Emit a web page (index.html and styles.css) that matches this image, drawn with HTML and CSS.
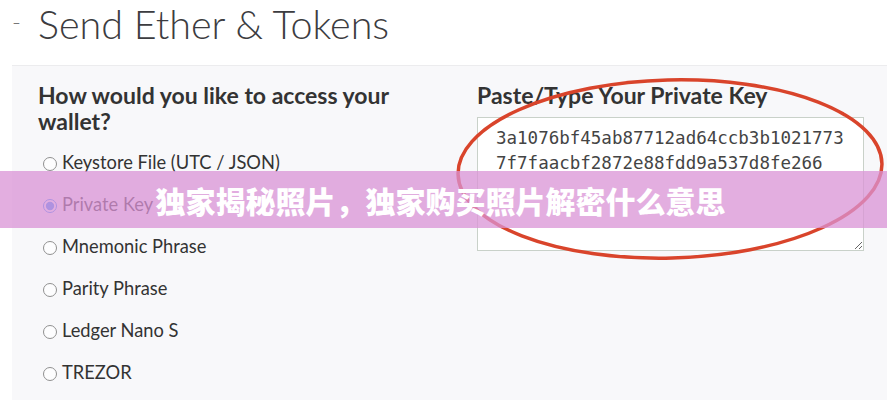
FILE: index.html
```html
<!DOCTYPE html>
<html lang="zh-CN">
    <head>
        <meta charset="UTF-8" />
        <meta name="viewport" content="width=device-width, initial-scale=1.0" />
        <title>Send Ether &amp; Tokens</title>
        <link rel="stylesheet" href="styles.css">
    </head>
    <body>
        <header class="top">
            <span class="dash">-</span>
            <h1 class="title">Send Ether &amp; Tokens</h1>
        </header>
        <main class="panel">
            <section class="access">
                <h2 class="heading">How would you like to access your wallet?</h2>
                <ul class="choices">
                    <li class="choice"><label><input type="radio" name="type" />Keystore File (UTC / JSON)</label></li>
                    <li class="choice"><label><input type="radio" name="type" checked />Private Key</label></li>
                    <li class="choice"><label><input type="radio" name="type" />Mnemonic Phrase</label></li>
                    <li class="choice"><label><input type="radio" name="type" />Parity Phrase</label></li>
                    <li class="choice"><label><input type="radio" name="type" />Ledger Nano S</label></li>
                    <li class="choice"><label><input type="radio" name="type" />TREZOR</label></li>
                </ul>
            </section>
            <section class="key">
                <h2 class="heading">Paste/Type Your Private Key</h2>
                <textarea class="keybox" readonly>3a1076bf45ab87712ad64ccb3b1021773
7f7faacbf2872e88fdd9a537d8fe266</textarea>
            </section>
        </main>
        <svg class="circle" width="887" height="400" viewBox="0 0 887 400">
            <ellipse cx="670" cy="169" rx="212" ry="89" transform="rotate(-1.5 670 169)" />
        </svg>
        <div class="banner">独家揭秘照片，独家购买照片解密什么意思</div>
    </body>
</html>
```

FILE: styles.css
```css
* {
    margin: 0;
    padding: 0;
    box-sizing: border-box;
}

body {
    position: relative;
    width: 887px;
    height: 400px;
    overflow: hidden;
    background: #fff;
    font-family: Lato, "Open Sans", sans-serif;
    color: #333;
}

.top {
    display: flex;
    align-items: center;
    height: 65px;
    padding-left: 12px;

    .dash {
        width: 26px;
        font-size: 24px;
        font-weight: 300;
        color: #777;
        margin-top: -22px;
    }
    .title {
        font-size: 39.5px;
        font-weight: 300;
        color: #3c3c40;
        margin-top: -18px;
    }
}

.panel {
    display: grid;
    grid-template-columns: 1fr 387px;
    height: 335px;
    margin-left: 12px;
    padding: 16px 23px 0 26px;
    background: #f8f8fa;
    border-top: 1px solid #ececee;
}

.heading {
    font-size: 23px;
    line-height: 26px;
    font-weight: 700;
    color: #333;
}

.access .heading {
    width: 400px;
}

.choices {
    margin-top: 7px;
    list-style: none;

    .choice {
        height: 42px;
        display: flex;
        align-items: center;
    }
    label {
        display: flex;
        align-items: center;
        font-size: 18.3px;
        color: #333;
    }
    input[type='radio'] {
        width: 14px;
        height: 14px;
        margin: 4px 5px 0 5px;
        opacity: 0.8;
    }
}

.keybox {
    display: block;
    width: 387px;
    height: 134px;
    margin-top: 9px;
    padding: 8px 10px 0 18px;
    border: 1px solid #c9d1c9;
    background: #fff;
    font-family: "DejaVu Sans Mono", monospace;
    font-size: 17.5px;
    line-height: 25px;
    color: #444;
    white-space: pre;
    overflow: hidden;
    resize: both;
}

.circle {
    position: absolute;
    left: 0;
    top: 0;
    pointer-events: none;

    ellipse {
        fill: none;
        stroke: #d9442b;
        stroke-width: 3.5;
    }
}

.banner {
    position: absolute;
    left: 0;
    top: 171px;
    width: 100%;
    height: 57px;
    display: flex;
    align-items: center;
    justify-content: center;
    padding-right: 6px;
    background: rgba(218, 147, 214, 0.75);
    color: #fff;
    font-family: "Noto Sans CJK SC", sans-serif;
    font-size: 30px;
    font-weight: 900;
}
```
